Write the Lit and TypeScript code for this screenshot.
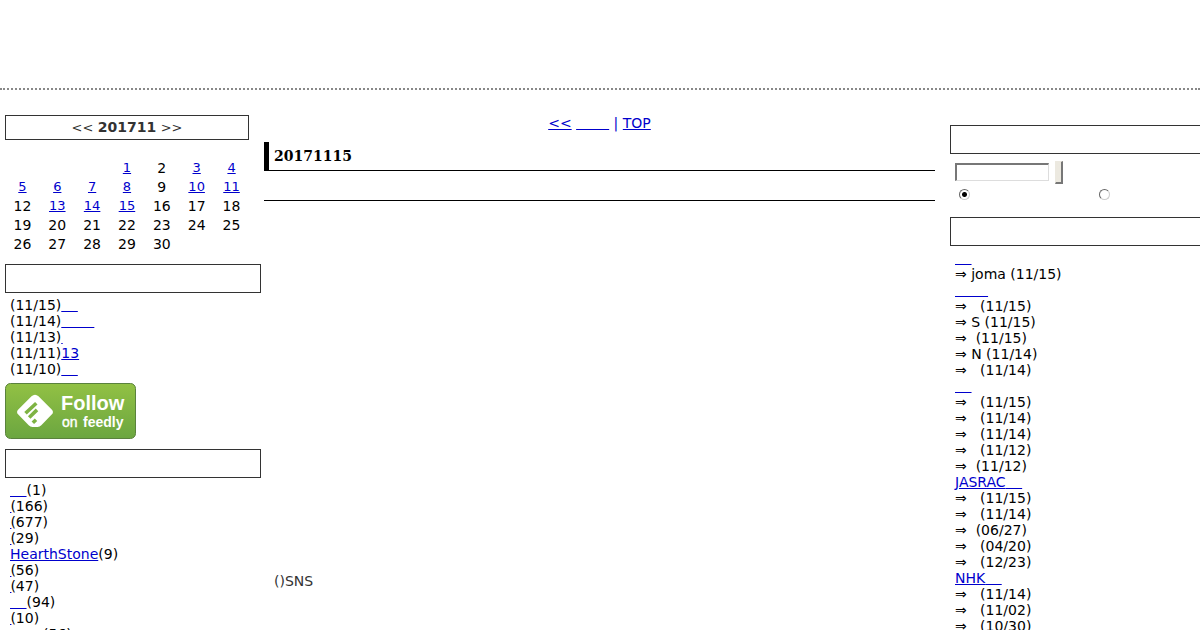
import { LitElement, html, css } from "lit";
import { customElement } from "lit/decorators.js";

const LINKED_DAYS = [1, 3, 4, 5, 6, 7, 8, 10, 11, 13, 14, 15];
const WEEKS = [0, 1, 2, 3, 4].map((w) => [0, 1, 2, 3, 4, 5, 6].map((d) => w * 7 + d - 2));

const NB = "\u00a0";
const HAIR = "\u200a";

interface Entry { name: string; blanks: number; after: string; before?: string }

const RECENT: Entry[] = [
  { before: "(11/15)", name: "", blanks: 4, after: "" },
  { before: "(11/14)", name: "", blanks: 8, after: "" },
  { before: "(11/13)", name: "", blanks: 0, after: "" },
  { before: "(11/11)", name: "13", blanks: 0, after: "" },
  { before: "(11/10)", name: "", blanks: 4, after: "" },
];

const CATEGORIES: Entry[] = [
  { name: "", blanks: 4, after: "(1)" },
  { name: "", blanks: 0, after: "(166)" },
  { name: "", blanks: 0, after: "(677)" },
  { name: "", blanks: 0, after: "(29)" },
  { name: "HearthStone", blanks: 0, after: "(9)" },
  { name: "", blanks: 0, after: "(56)" },
  { name: "", blanks: 0, after: "(47)" },
  { name: "", blanks: 4, after: "(94)" },
  { name: "", blanks: 0, after: "(10)" },
  { name: "", blanks: 8, after: "(56)" },
];

const W = NB + NB;
const COMMENTS = [
  { name: "", blanks: 4, replies: ["joma (11/15)"] },
  { name: "", blanks: 8, replies: [W + "(11/15)", "S (11/15)", NB + "(11/15)", "N (11/14)", W + "(11/14)"] },
  { name: "", blanks: 4, replies: [W + "(11/15)", W + "(11/14)", W + "(11/14)", W + "(11/12)", NB + "(11/12)"] },
  { name: "JASRAC", blanks: 4, replies: [W + "(11/15)", W + "(11/14)", NB + "(06/27)", W + "(04/20)", W + "(12/23)"] },
  { name: "NHK", blanks: 4, replies: [W + "(11/14)", W + "(11/02)", W + "(10/30)"] },
];

const link = (name: string, blanks: number) =>
  name || blanks
    ? html`<a href="#">${name}<span class="blank">${NB.repeat(blanks)}</span></a>`
    : html`<a class="sliver" href="#">${HAIR}</a>`;

@customElement("app-root")
export class AppRoot extends LitElement {
  static styles = css`
    :host {
      display: block;
      height: 100vh;
      overflow: hidden;
      background: #fff;
      color: #000;
      font: 14px/16px "DejaVu Sans", Verdana, sans-serif;
    }
    * { box-sizing: border-box; }
    a { color: #0000cc; }
    ul { list-style: none; margin: 0; padding: 0; }
    .banner { height: 90px; border-bottom: 2px dotted #888; }
    .columns {
      display: grid;
      grid-template-columns: 256px minmax(0, 1fr) 250px;
      padding-top: 25px;
    }
    .left { padding-left: 5px; }
    .month {
      width: 244px;
      height: 25px;
      border: 1px solid #333;
      margin: 0 0 18px;
      color: #333;
      font-size: 14px;
      line-height: 23px;
      font-weight: normal;
      text-align: center;
    }
    .month span { font-size: 13px; }
    .calendar {
      width: 244px;
      margin-bottom: 11px;
      table-layout: fixed;
      border-collapse: collapse;
      text-align: center;
    }
    .calendar td { height: 19px; padding: 0; }
    .calendar a, .blank { font-size: 13px; }
    .blank { line-height: 0; }
    .sliver { margin-right: -1px; }
    .heading {
      width: 256px;
      height: 29px;
      border: 1px solid #333;
      margin: 10px 0 4px;
    }
    .calendar + .heading { margin-top: 0; }
    .list { padding-left: 5px; white-space: nowrap; }
    .feedly { display: block; width: 131px; height: 56px; margin-top: 6px; }
    .feedly svg { display: block; }
    .center { padding: 0 15px 0 8px; }
    .pager { text-align: center; color: #0000cc; }
    .date {
      margin: 11px 0 0;
      height: 29px;
      border-left: 5px solid #000;
      border-bottom: 1px solid #000;
      padding-left: 5px;
      font: bold 14px/28px "DejaVu Serif", serif;
    }
    .title { margin: 0; height: 30px; border-bottom: 1px solid #000; }
    .body { margin: 0; padding: 372px 10px 0; color: #333; }
    .right { padding-top: 10px; }
    .right .heading { margin: 0; }
    .search { height: 63px; padding: 6px 0 0 5px; }
    .row { display: flex; align-items: center; gap: 6px; height: 24px; }
    .query {
      width: 94px;
      height: 18px;
      padding: 1px;
      border: 1px solid #ddd;
      border-top: 2px solid #777;
      border-left: 2px solid #777;
      background: #fff;
    }
    .go {
      width: 8px;
      height: 23px;
      padding: 0;
      border: 1px solid #ece9e0;
      border-right: 2px solid #777;
      border-bottom: 2px solid #777;
      background: #ece9e0;
    }
    .choices { display: grid; grid-template-columns: 140px 1fr; padding: 5px 0 0 4px; }
    .radio {
      appearance: none;
      display: block;
      width: 11px;
      height: 11px;
      margin: 0;
      border: 1px solid #ccc;
      border-top-color: #666;
      border-left-color: #666;
      border-radius: 50%;
    }
    .radio:checked { background: radial-gradient(circle, #000 0 2px, #fff 3px); }
    .right .list { padding-top: 4px; }
  `;

  private entries(items: Entry[]) {
    return html`<ul class="list">
      ${items.map((e) => html`<li>${e.before ?? ""}${link(e.name, e.blanks)}${e.after}</li>`)}
    </ul>`;
  }

  render() {
    return html`
      <header class="banner"></header>
      <div class="columns">
        <aside class="left">
          <h2 class="month"><span>&lt;&lt;</span> <b>201711</b> <span>&gt;&gt;</span></h2>
          <table class="calendar">
            <tbody>
              ${WEEKS.map((week) => html`<tr>${week.map((d) => html`<td>${
                d < 1 || d > 30 ? "" : LINKED_DAYS.includes(d) ? html`<a href="#">${d}</a>` : d
              }</td>`)}</tr>`)}
            </tbody>
          </table>
          <div class="heading"></div>
          ${this.entries(RECENT)}
          <a class="feedly" href="#" aria-label="Follow on feedly">
            <svg width="131" height="56" viewBox="0 0 131 56">
              <defs>
                <linearGradient id="green" x1="0" y1="0" x2="0" y2="1">
                  <stop offset="0" stop-color="#92c144" />
                  <stop offset="1" stop-color="#6ba640" />
                </linearGradient>
              </defs>
              <rect x=".5" y=".5" width="130" height="55" rx="5" fill="url(#green)" stroke="#5a823d" />
              <path fill="#fff" d="M26.500 13.200Q30 10.200 33.500 13.200L46.700 26.400Q49.200 29 46.700 31.600L36.300 42.300Q34.800 44 32.500 44H27.500Q25.200 44 23.700 42.300L13.300 31.600Q10.800 29 13.300 26.400Z" />
              <g stroke="#7eb343" stroke-width="3.600" stroke-linecap="butt">
                <path d="M20.500 30.300L31.300 20.200M24.200 34.500L32 26.900M27.800 39.700L31 36.700" />
              </g>
              <g font-family="Liberation Sans, sans-serif" font-weight="bold" fill="#fff">
                <text x="56" y="27" font-size="20">Follow</text>
                <text x="57" y="44" font-size="14" font-weight="normal" stroke="#fff" stroke-width=".4">on</text>
                <text x="78" y="44" font-size="14">feedly</text>
              </g>
            </svg>
          </a>
          <div class="heading"></div>
          ${this.entries(CATEGORIES)}
        </aside>
        <main class="center">
          <nav class="pager"><a href="#">&lt;&lt;</a> ${link("", 8)} | <a href="#">TOP</a></nav>
          <h2 class="date">20171115</h2>
          <h3 class="title"></h3>
          <p class="body">()SNS</p>
        </main>
        <aside class="right">
          <div class="heading"></div>
          <form class="search">
            <div class="row">
              <input class="query" type="text" aria-label="Search" />
              <button class="go" type="button" aria-label="Search"></button>
            </div>
            <div class="choices">
              <input class="radio" type="radio" name="scope" aria-label="This blog" checked />
              <input class="radio" type="radio" name="scope" aria-label="All blogs" />
            </div>
          </form>
          <div class="heading"></div>
          <ul class="list">
            ${COMMENTS.map((c) => html`
              <li>${link(c.name, c.blanks)}
                <ul>${c.replies.map((r) => html`<li>⇒ ${r}</li>`)}</ul>
              </li>`)}
          </ul>
        </aside>
      </div>
    `;
  }
}
